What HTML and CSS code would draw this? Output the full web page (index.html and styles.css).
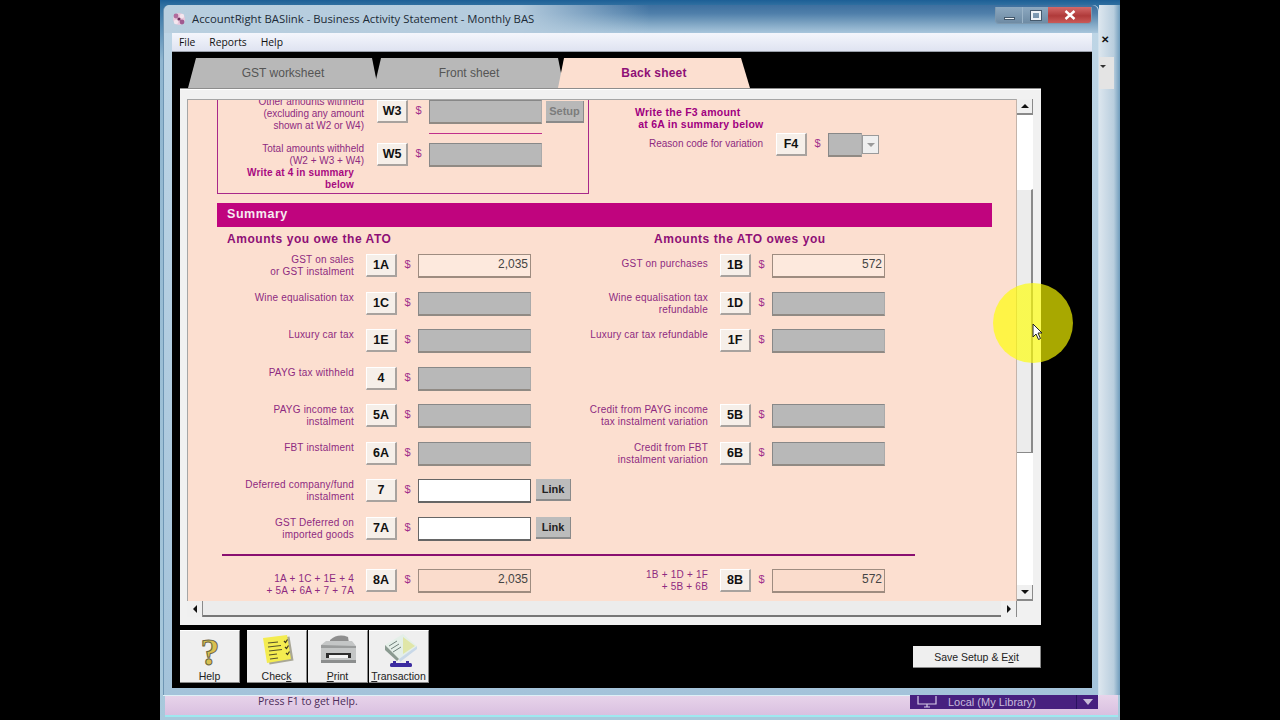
FILE: index.html
```html
<!DOCTYPE html>
<html lang="en">
<head>
<meta charset="utf-8">
<title>AccountRight BASlink</title>
<link rel="stylesheet" href="styles.css">
</head>
<body>
<div class="stage">
  <div class="desktop-row">
    <div class="window">
      <header class="titlebar">
        <svg class="app-icon" viewBox="0 0 16 16" width="16" height="16"><circle cx="8" cy="8" r="6" fill="#e8c8dc"/><circle cx="5" cy="5" r="2.4" fill="#b06a9c"/><circle cx="11" cy="5" r="2.2" fill="#f4e6ee"/><circle cx="5" cy="11" r="2.2" fill="#f4e6ee"/><circle cx="11" cy="11" r="2.4" fill="#a05a90"/><circle cx="8" cy="8" r="1.6" fill="#70305f"/></svg>
        <span class="title-text">AccountRight BASlink - Business Activity Statement - Monthly BAS</span>
        <div class="controls">
          <span class="ctl ctl-min"><i class="glyph-min"></i></span>
          <span class="ctl ctl-max"><i class="glyph-max"></i></span>
          <span class="ctl ctl-close">
            <svg viewBox="0 0 12 10" width="12" height="10"><path d="M1.5 1 L10.5 9 M10.5 1 L1.5 9" stroke="#fff" stroke-width="2.4" fill="none"/></svg>
          </span>
        </div>
      </header>
      <nav class="menubar"><span>File</span><span>Reports</span><span>Help</span></nav>
      <main class="client">
        <div class="tabs">
          <div class="tab tab-a">GST worksheet</div>
          <div class="tab tab-b">Front sheet</div>
          <div class="tab tab-c">Back sheet</div>
        </div>
        <section class="panel">
          <div class="scroll-area">
            <div class="form">
              <div class="top">
                <div class="box">
                  <div class="box-row">
                    <div class="box-label first">Other amounts withheld<br>(excluding any amount<br>shown at W2 or W4)</div>
                    <span class="btn">W3</span><span class="dollar">$</span><span class="field grey"></span><span class="setup">Setup</span>
                  </div>
                  <div class="sum-line"></div>
                  <div class="box-row">
                    <div class="box-label">Total amounts withheld<br>(W2 + W3 + W4)<strong>Write at 4 in summary<br>below</strong></div>
                    <span class="btn">W5</span><span class="dollar">$</span><span class="field grey"></span>
                  </div>
                </div>
                <div class="top-right">
                  <div class="note">Write the F3 amount<br>&nbsp;at 6A in summary below</div>
                  <div class="reason">
                    <span class="reason-label">Reason code for variation</span>
                    <span class="btn">F4</span><span class="dollar">$</span>
                    <span class="field grey combo"></span>
                    <span class="combo-btn"><i class="tri tri-down grey-tri"></i></span>
                  </div>
                </div>
              </div>
              <div class="band">Summary</div>
              <div class="heads"><h3>Amounts you owe the ATO</h3><h3 class="head-r">Amounts the ATO owes you</h3></div>
              <div class="rows">
                <div class="cell"><div class="lbl up2">GST on sales<br>or GST instalment</div><span class="btn">1A</span><span class="dollar">$</span><span class="field value light">2,035</span></div>
                <div class="cell"><div class="lbl up1">GST on purchases</div><span class="btn">1B</span><span class="dollar">$</span><span class="field value light">572</span></div>

                <div class="cell"><div class="lbl up2">Wine equalisation tax</div><span class="btn">1C</span><span class="dollar">$</span><span class="field grey"></span></div>
                <div class="cell"><div class="lbl up2">Wine equalisation tax<br>refundable</div><span class="btn">1D</span><span class="dollar">$</span><span class="field grey"></span></div>

                <div class="cell"><div class="lbl up2">Luxury car tax</div><span class="btn">1E</span><span class="dollar">$</span><span class="field grey"></span></div>
                <div class="cell"><div class="lbl up7">Luxury car tax refundable</div><span class="btn">1F</span><span class="dollar">$</span><span class="field grey"></span></div>

                <div class="cell"><div class="lbl up2">PAYG tax withheld</div><span class="btn">4</span><span class="dollar">$</span><span class="field grey"></span></div>
                <div></div>

                <div class="cell"><div class="lbl up3">PAYG income tax<br>instalment</div><span class="btn">5A</span><span class="dollar">$</span><span class="field grey"></span></div>
                <div class="cell"><div class="lbl up3">Credit from PAYG income<br>tax instalment variation</div><span class="btn">5B</span><span class="dollar">$</span><span class="field grey"></span></div>

                <div class="cell"><div class="lbl up7">FBT instalment</div><span class="btn">6A</span><span class="dollar">$</span><span class="field grey"></span></div>
                <div class="cell"><div class="lbl up2">Credit from FBT<br>instalment variation</div><span class="btn">6B</span><span class="dollar">$</span><span class="field grey"></span></div>

                <div class="cell"><div class="lbl up2">Deferred company/fund<br>instalment</div><span class="btn">7</span><span class="dollar">$</span><span class="field white"></span><span class="link">Link</span></div>
                <div></div>

                <div class="cell"><div class="lbl up2">GST Deferred on<br>imported goods</div><span class="btn">7A</span><span class="dollar">$</span><span class="field white"></span><span class="link">Link</span></div>
                <div></div>
              </div>
              <div class="rule"></div>
              <div class="rows">
                <div class="cell"><div class="lbl up1">1A + 1C + 1E + 4<br>+ 5A + 6A + 7 + 7A</div><span class="btn">8A</span><span class="dollar">$</span><span class="field value">2,035</span></div>
                <div class="cell"><div class="lbl up3">1B + 1D + 1F<br>+ 5B + 6B</div><span class="btn">8B</span><span class="dollar">$</span><span class="field value">572</span></div>
              </div>
            </div>
            <div class="vscroll">
              <span class="sb-btn"><i class="tri tri-up"></i></span>
              <span class="sb-gap-top"></span>
              <span class="v-thumb"></span>
              <span class="sb-gap-bottom"></span>
              <span class="sb-btn"><i class="tri tri-down"></i></span>
            </div>
          </div>
          <div class="hscroll">
            <span class="sb-btn h"><i class="tri tri-left"></i></span>
            <span class="h-thumb"></span>
            <span class="sb-btn h"><i class="tri tri-right"></i></span>
          </div>
        </section>
        <div class="toolbar">
          <button class="tool tool-help">
            <svg viewBox="0 0 40 38" width="40" height="38"><text x="20" y="33" text-anchor="middle" class="qmark">?</text></svg>
            <span>Help</span>
          </button>
          <div class="tool-group">
            <button class="tool">
              <svg viewBox="0 0 40 38" width="40" height="38"><path d="M7 7 L31 3 L35 27 L11 31 Z" fill="#55502a" opacity=".45" transform="translate(1.5 1.5)"/><path d="M6 6 L30 3 L34 27 L10 31 Z" fill="#f4ec50"/><path d="M11 11 L21 10 M11 15 L24 13.5 M12 19 L25 17.5 M12 23 L20 22 M13 27 L21 26" stroke="#55502a" stroke-width="1.2"/><path d="M27 9 l1.5 1.5 l2 -3 M28 15 l1.5 1.5 l2 -3 M29 21 l1.5 1.5 l2 -3" stroke="#403a20" stroke-width="1.2" fill="none"/></svg>
              <span>Chec<u>k</u></span>
            </button>
            <button class="tool">
              <svg viewBox="0 0 40 38" width="40" height="38"><path d="M12 8 Q20 1 30 5 L31 11 L12 11 Z" fill="#8e8e8e"/><path d="M3 13 L8 9 L34 9 L38 14 L38 29 L3 29 Z" fill="#c4c6c6"/><path d="M3 13 L38 14 L38 16 L3 16 Z" fill="#9a9c9c"/><rect x="8" y="21" width="25" height="5" fill="#2e2e2e"/><rect x="11" y="23" width="19" height="3" fill="#f4f4f4"/><rect x="3" y="28" width="35" height="3" fill="#8c8e8e"/></svg>
              <span><u>P</u>rint</span>
            </button>
            <button class="tool">
              <svg viewBox="0 0 40 38" width="40" height="38"><path d="M6 13 L24 2 L38 14 L20 27 Z" fill="#e4efe8"/><path d="M20 27 L38 14 L38 17 L21 30 Z" fill="#c8d8e8"/><path d="M24 5 L36 14 L24 22 Z" fill="#e0e6a8"/><path d="M6 13 L20 27 L18 29 L6 18 Z" fill="#8a9a90"/><path d="M10 14 L18 9 M12 17 L20 12 M14 20 L22 15" stroke="#70807a" stroke-width="1"/><rect x="11" y="31" width="22" height="4" rx="1.5" fill="#3c2ca0"/><rect x="14" y="29" width="3" height="3" fill="#3c2ca0"/><rect x="27" y="29" width="3" height="3" fill="#3c2ca0"/></svg>
              <span><u>T</u>ransaction</span>
            </button>
          </div>
          <button class="save">Save Setup &amp; E<u>x</u>it</button>
        </div>
      </main>
    </div>
    <aside class="behind-right">
      <span class="behind-x">✕</span>
      <span class="behind-arrow"><i class="tri tri-down small"></i></span>
    </aside>
  </div>
  <footer class="status">
    <span class="status-text">Press F1 to get Help.</span>
    <div class="library">
      <svg viewBox="0 0 20 12" width="20" height="12"><path d="M1 0 V8 H19 V0 M7 11 H13 M10 8 V11" stroke="#d8cce8" stroke-width="1.2" fill="none"/></svg>
      <span class="library-text">Local (My Library)</span>
      <span class="library-drop"><i class="tri tri-down pale"></i></span>
    </div>
  </footer>
  <div class="spot"></div>
  <svg class="pointer" viewBox="0 0 12 18" width="12" height="18"><path d="M1 1 V14 L4 11 L6.5 16.5 L8.5 15.5 L6 10 H10 Z" fill="#fff" stroke="#222" stroke-width="1"/></svg>
</div>
</body>
</html>
```
FILE: styles.css
```css
* { box-sizing: border-box; }
html, body { margin: 0; height: 100%; background: #000; overflow: hidden; }
body { font-family: "Liberation Sans", Arial, sans-serif; }
button { font-family: inherit; padding: 0; margin: 0; }
u { text-underline-offset: 1px; }

.stage {
  position: relative;
  width: 960px;
  height: 720px;
  margin-left: 160px;
  overflow: hidden;
  padding: 5px 0 0 3px;
  background: linear-gradient(#1d5f96 0, #2f6fa0 5px, #8fb5cf 60px, #a9c9dc 100%);
}
.desktop-row { display: flex; height: 690px; }

/* window frame */
.window {
  width: 936px;
  height: 690px;
  display: flex;
  flex-direction: column;
  padding: 0 6px 7px 8px;
  border-radius: 6px 6px 0 0;
  background: linear-gradient(#bfd6e6, #a4c3da);
  border-left: 1px solid #6f96b4;
  border-right: 1px solid #cfe0ec;
  box-shadow: 0 1px 0 #dff0f6;
}
.titlebar {
  height: 28px;
  margin: 0 -6px 0 -8px;
  padding: 5px 6px 0 7px;
  display: flex;
  align-items: flex-start;
  border-radius: 6px 6px 0 0;
  background:
    linear-gradient(90deg, #b9cfdf 0, #b4cbdd 38%, rgba(150,185,210,0) 52%),
    linear-gradient(#3d6f9f 0, #4f7faa 30%, #7ca3c2 65%, #a8c6dc 100%);
}
.app-icon { margin-top: 1px; }
.title-text { margin-left: 5px; margin-top: 1px; font: 11.3px "Open Sans", sans-serif; color: #1b2a36; white-space: nowrap; }
.controls { margin-left: auto; display: flex; height: 17px; margin-top: -3px; border: 1px solid #7d98ae; border-top: 0; border-radius: 0 0 4px 4px; overflow: hidden; }
.ctl { display: flex; align-items: center; justify-content: center; height: 100%; }
.ctl-min { width: 27px; background: linear-gradient(#8ca8c0, #6e8ba4); border-right: 1px solid #9bb4c8; }
.ctl-max { width: 25px; background: linear-gradient(#8ca8c0, #6e8ba4); }
.ctl-close { width: 43px; background: linear-gradient(#d46a6a, #b03a3a 55%, #c95a58); }
.glyph-min { width: 11px; height: 3px; margin-top: 6px; background: #eef3f7; border: 1px solid #44596c; }
.glyph-max { width: 10px; height: 9px; border: 2px solid #eef3f7; outline: 1px solid #44596c; }

.menubar {
  height: 19px;
  display: flex;
  align-items: center;
  gap: 14px;
  padding-left: 7px;
  font: 10.3px "Open Sans", sans-serif;
  color: #111;
  background: linear-gradient(#f4f6fc, #dfe3f1);
  border-bottom: 1px solid #9aa0aa;
}

.client { height: 636px; background: #000; padding: 6px 0 0 8px; display: flex; flex-direction: column; }

/* tabs */
.tabs { display: flex; height: 30px; margin-left: 8px; font-size: 12px; color: #555; }
.tab { display: flex; align-items: center; justify-content: center; height: 30px; padding-bottom: 1px; }
.tab-a { width: 190px; background: #b8b8b8; clip-path: polygon(0 100%, 8px 0, 184px 0, 190px 100%); }
.tab-b { width: 190px; margin-left: -4px; background: #b8b8b8; clip-path: polygon(0 100%, 7px 0, 184px 0, 190px 100%); }
.tab-c { width: 192px; margin-left: -6px; background: #fcdfd0; color: #8e0f76; font-weight: bold; clip-path: polygon(0 100%, 6px 0, 183px 0, 192px 100%); letter-spacing: .2px; }

/* panel */
.panel { width: 861px; height: 537px; padding: 10px 8px 0 7px; background: #f1f1f1; border-top: 1px solid #8d8d8d; box-shadow: inset 0 1px 0 #fff; }
.scroll-area { display: flex; height: 502px; }
.form { width: 830px; height: 502px; overflow: hidden; padding-left: 30px; background: #fcdfd0; border-top: 1px solid #a6a6a6; border-left: 1px solid #a6a6a6; border-right: 1px solid #c4b4aa; color: #8e2a80; font-size: 10px; margin-left: 0; }

.top { display: flex; height: 94px; }
.box { width: 372px; height: 94px; margin-left: -1px; border: 1px solid #a8288a; border-top: 0; }
.box-row { display: flex; align-items: flex-start; height: 24px; }
.box-label { width: 146px; flex: none; text-align: right; line-height: 12px; margin-right: 13px; white-space: nowrap; }
.box-label.first { margin-top: -4px; }
.box-label strong { display: block; padding-right: 10px; color: #a80a80; letter-spacing: .15px; }
.sum-line { width: 113px; height: 1px; margin: 9px 0 9px 211px; background: #c0308c; }

.btn { flex: none; display: flex; align-items: center; justify-content: center; width: 31px; height: 23px; background: #f6efe9; border-right: 2px solid #a8a29e; border-bottom: 2px solid #a8a29e; border-top: 1px solid #fff; border-left: 1px solid #fff; font-size: 12.5px; font-weight: bold; color: #111; }
.dollar { flex: none; width: 21px; text-align: center; font-size: 11px; color: #a0308c; padding-top: 4px; }
.field { flex: none; width: 113px; height: 24px; border: 1px solid #888; border-right-color: #aaa; border-bottom: 2px solid #908a84; }
.grey { background: #b8b8b8; }
.white { background: #fff; border-color: #666; }
.value { text-align: right; padding: 2px 2px 0 0; font-size: 12px; line-height: 14px; color: #444; background: #fadccc; border-color: #9e8c80; }
.value.light { background: #fde9dd; }
.setup { width: 38px; height: 22px; margin: 1px 0 0 4px; display: flex; align-items: center; justify-content: center; background: #b8b8b8; border-right: 1px solid #8a8a8a; border-bottom: 2px solid #8a8a8a; font-size: 11px; font-weight: bold; color: #7c7c7c; }
.link { width: 38px; height: 22px; margin-left: 5px; display: flex; align-items: center; justify-content: center; background: #bcbcbc; border-right: 1px solid #8a8a8a; border-bottom: 2px solid #8a8a8a; font-size: 11px; font-weight: bold; color: #222; }

.top-right { margin-left: 46px; }
.note { height: 33px; padding-top: 6px; font-size: 10.5px; line-height: 12px; font-weight: bold; color: #a00080; white-space: nowrap; letter-spacing: .25px; }
.reason { display: flex; align-items: flex-start; margin-left: 14px; }
.reason-label { width: 115px; margin-right: 12px; line-height: 12px; padding-top: 5px; white-space: nowrap; }
.combo { width: 34px; }
.combo-btn { width: 17px; height: 19px; margin-top: 2px; display: flex; align-items: center; justify-content: center; background: #efefef; border: 1px solid #9a9a9a; }

.band { height: 24px; margin: 9px 0 0 -1px; width: 775px; padding: 4px 0 0 10px; background: #c0047e; color: #f6eaf0; font-size: 12.5px; font-weight: bold; letter-spacing: .55px; }
.heads { display: flex; height: 27px; padding: 5px 0 0 9px; }
.heads h3 { margin: 0; font-size: 12px; line-height: 14px; font-weight: bold; color: #8e0f76; letter-spacing: .55px; white-space: nowrap; width: 427px; }
.heads h3.head-r { width: auto; }

.rows { display: grid; grid-template-columns: 354px 1fr; grid-auto-rows: 37.5px; margin-left: -1px; }
.cell { display: flex; align-items: flex-start; white-space: nowrap; }
.lbl { width: 137px; flex: none; height: 24px; margin-right: 12px; display: flex; flex-direction: column; justify-content: center; text-align: right; line-height: 12px; display: block; letter-spacing: .02em; }
.up1 { padding-top: 4px; }
.up2 { padding-top: 0; }
.up3 { margin-top: 0; }
.up7 { padding-top: 0; }
.rule { width: 693px; height: 2px; margin: 0 0 13px 4px; background: #8a1070; }

/* scrollbars */
.vscroll { width: 16px; height: 502px; display: flex; flex-direction: column; background: #fff; }
.sb-btn { flex: none; width: 16px; height: 16px; display: flex; align-items: center; justify-content: center; background: #f0f0f0; border-right: 1px solid #8a8a8a; border-bottom: 2px solid #8a8a8a; }
.sb-gap-top { height: 74px; background: #fff; }
.v-thumb { height: 264px; flex: none; background: #ececec; border-right: 2px solid #8a8a8a; border-bottom: 1px solid #8a8a8a; border-top: 1px solid #fff; }
.sb-gap-bottom { flex: 1; background: #fff; }
.hscroll { display: flex; width: 830px; height: 16px; background: #ececec; border-bottom: 2px solid #777; }
.sb-btn.h { border-bottom: 0; }
.h-thumb { flex: 1; background: #ececec; }
.tri { display: block; width: 0; height: 0; border: 4px solid transparent; }
.tri-up { border-bottom: 4px solid #111; border-top: 0; }
.tri-down { border-top: 4px solid #111; border-bottom: 0; }
.tri-left { border-right: 4px solid #111; border-left: 0; }
.tri-right { border-left: 4px solid #111; border-right: 0; }
.grey-tri { border-top-color: #9a9a9a; }
.tri.small { border-width: 3px 3px 0; border-top-color: #333; }
.tri.pale { border-width: 6px 5px 0; border-top-color: #c8bcd8; }

/* toolbar */
.toolbar { display: flex; align-items: flex-start; width: 861px; height: 53px; margin-top: 5px; }
.tool-group { display: flex; gap: 1px; margin-left: 7px; }
.tool { flex: none; width: 60px; height: 53px; display: flex; flex-direction: column; align-items: center; background: #efefef; border: 0; border-right: 1px solid #888; border-bottom: 1px solid #888; border-top: 1px solid #fff; font-size: 10.5px; color: #222; padding-top: 1px; }
.tool span { line-height: 12px; margin-top: 0; white-space: nowrap; }
.qmark { font: bold 38px "Liberation Serif", serif; fill: #d8c050; stroke: #6a6440; stroke-width: 1; }
.save { width: 128px; height: 22px; margin: 16px 0 0 auto; background: #efefef; border: 0; border-right: 1px solid #888; border-bottom: 1px solid #888; font-size: 10.5px; color: #222; }

/* behind */
.behind-right { width: 21px; height: 100%; padding: 28px 0 0 0; display: flex; flex-direction: column; background: linear-gradient(90deg, #dce6ee, #b9cede 70%, #6f9cbc); }
.behind-x { margin-left: 2px; height: 14px; font-size: 10px; font-weight: bold; color: #111; line-height: 14px; }
.behind-arrow { margin-top: 10px; width: 15px; height: 32px; padding: 8px 0 0 1px; background: #e4e4e4; }

.status { display: flex; align-items: flex-start; height: 22px; margin: 0 2px 0 2px; padding-left: 93px; background: linear-gradient(#e8d4ea, #d9c0e0); border-bottom: 2px solid #9fe8f0; font-size: 11px; color: #4a2c58; }
.status-text { padding-top: 0; font-size: 10.5px; line-height: 13px; flex: none; width: 652px; font-family: "Open Sans", sans-serif; }
.library { display: flex; align-items: center; width: 188px; height: 14px; padding-left: 7px; background: #47207f; }
.library-text { margin-left: 11px; font-size: 11px; color: #c8bcdc; }
.library-drop { margin-left: auto; width: 22px; height: 14px; display: flex; align-items: center; justify-content: center; border-left: 1px solid #2a1260; background: #47207f; }

.spot { position: absolute; left: 833px; top: 283px; width: 80px; height: 80px; border-radius: 50%; background: radial-gradient(circle, rgba(255,255,0,.66) 92%, rgba(255,255,0,0) 100%); }
.pointer { position: absolute; left: 872px; top: 323px; }
```
